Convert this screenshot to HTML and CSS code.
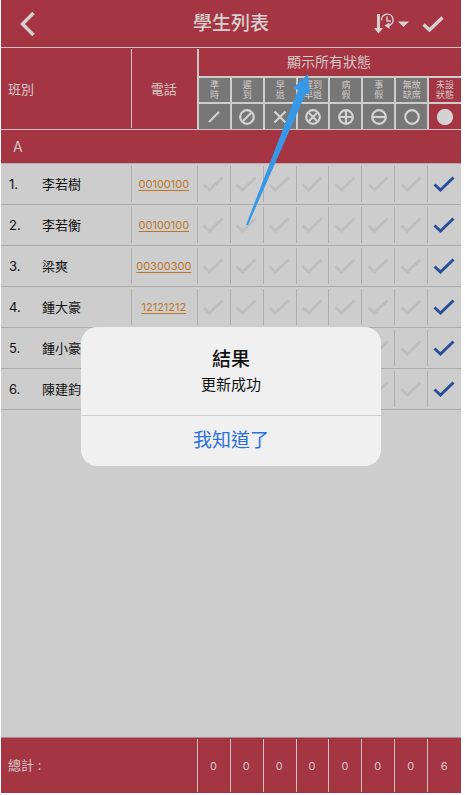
FILE: index.html
```html
<!DOCTYPE html>
<html lang="zh-Hant">
<head>
<meta charset="utf-8">
<meta name="viewport" content="width=device-width, initial-scale=1">
<title>學生列表</title>
<link rel="stylesheet" href="styles.css">
</head>
<body>
<svg class="sprite" aria-hidden="true">
  <symbol id="check" viewBox="0 0 22 16"><path d="M1.5 8.5 7.5 14 20.5 1.5"/></symbol>
  <symbol id="on-time" viewBox="0 0 16 16"><path d="M3 13 13 3"/></symbol>
  <symbol id="late" viewBox="0 0 16 16"><circle cx="8" cy="8" r="6.8"/><path d="M4 12 12 4"/></symbol>
  <symbol id="early" viewBox="0 0 16 16"><path d="M2.5 2.5 13.5 13.5M13.5 2.5 2.5 13.5"/></symbol>
  <symbol id="late-early" viewBox="0 0 16 16"><circle cx="8" cy="8" r="6.8"/><path d="M4 4 12 12M12 4 4 12"/></symbol>
  <symbol id="sick" viewBox="0 0 16 16"><circle cx="8" cy="8" r="6.8"/><path d="M8 1V15M1 8H15"/></symbol>
  <symbol id="leave" viewBox="0 0 16 16"><circle cx="8" cy="8" r="6.8"/><path d="M2 8H14"/></symbol>
  <symbol id="absent" viewBox="0 0 16 16"><circle cx="8" cy="8" r="6.8"/></symbol>
  <symbol id="unset" viewBox="0 0 16 16"><circle cx="8" cy="8" r="7" fill="currentColor"/></symbol>
</svg>
<div class="app">
  <header class="bar">
    <button class="icon-btn back" aria-label="返回"><svg width="20" height="26" viewBox="0 0 20 26"><path d="M15.500 2 4.500 13 15.500 24"/></svg></button>
    <h1>學生列表</h1>
    <div class="actions">
      <button class="icon-btn" aria-label="排序">
        <svg class="sort" width="36" height="22" viewBox="0 0 36 22">
          <path d="M4.500 1V17" stroke-width="3"/><path class="solid" d="M0 15 9 15 4.500 20.500Z"/>
          <path d="M7.500 7.500A5.800 5.800 0 1 1 15 12.500" stroke-width="1.500"/><path d="M13 3.500V8H17" stroke-width="1.500"/><path class="solid" d="M15.500 9.500V16L10.500 12.500Z"/>
          <path class="solid" d="M24 8.500H35L29.500 14Z"/>
        </svg>
      </button>
      <button class="icon-btn" aria-label="確定"><svg class="done" width="22" height="16"><use href="#check"/></svg></button>
    </div>
  </header>
  <main>
    <table class="grid">
      <colgroup><col class="c-name"><col class="c-phone"><col span="7" class="c-state"><col class="c-last"></colgroup>
      <thead>
        <tr class="r-title"><th rowspan="3" class="class-head">班別</th><th rowspan="3" class="phone-head">電話</th><th colspan="8" class="all-head">顯示所有狀態</th></tr>
        <tr class="r-label" id="labels"></tr>
        <tr class="r-icon" id="icons"></tr>
        <tr class="r-section"><th colspan="10">A</th></tr>
      </thead>
      <tbody id="students"></tbody>
    </table>
  </main>
  <footer>
    <table class="grid totals">
      <colgroup><col class="c-name"><col class="c-phone"><col span="7" class="c-state"><col class="c-last"></colgroup>
      <tbody><tr><th colspan="2">總計 :</th><td>0</td><td>0</td><td>0</td><td>0</td><td>0</td><td>0</td><td>0</td><td>6</td></tr></tbody>
    </table>
  </footer>
  <div class="shade">
    <section class="alert" role="alertdialog" aria-labelledby="alert-title" aria-describedby="alert-text">
      <div class="alert-body"><h2 id="alert-title">結果</h2><p id="alert-text">更新成功</p></div>
      <button class="alert-ok">我知道了</button>
    </section>
  </div>
  <svg class="pointer" width="66" height="152" viewBox="0 0 66 152" aria-hidden="true"><path d="M62 0 47 14 52 16 0 151 2 151 60 19 64 21Z"/></svg>
</div>
<script src="app.js"></script>
</body>
</html>
```
FILE: app.js
```js
const states = [
  ['準', '時', 'on-time'], ['遲', '到', 'late'], ['早', '退', 'early'], ['遲到', '早退', 'late-early'],
  ['病', '假', 'sick'], ['事', '假', 'leave'], ['無故', '缺席', 'absent'], ['未設', '狀態', 'unset'],
];
const students = [
  ['李若樹', '00100100'], ['李若衡', '00100100'], ['梁爽', '00300300'],
  ['鍾大豪', '12121212'], ['鍾小豪', '12121212'], ['陳建鈞', '12121212'],
];
const icon = (name, w, h) => `<svg width="${w}" height="${h}"><use href="#${name}"/></svg>`;

document.getElementById('labels').innerHTML =
  states.map(([a, b]) => `<th class="state">${a}<br>${b}</th>`).join('');
document.getElementById('icons').innerHTML =
  states.map(([a, b, id]) => `<th class="state"><button class="icon-btn" aria-label="${a}${b}">${icon(id, 16, 16)}</button></th>`).join('');
document.getElementById('students').innerHTML = students.map(([name, phone], i) =>
  `<tr><td class="name"><span class="num">${i + 1}.</span>${name}</td>` +
  `<td class="phone"><a href="tel:${phone}">${phone}</a></td>` +
  states.map(([a, b, id]) => `<td class="mark"><button class="icon-btn${id === 'unset' ? ' on' : ''}" aria-label="${name} ${a}${b}">${icon('check', 22, 16)}</button></td>`).join('') +
  '</tr>').join('');
```
FILE: styles.css
```css
* { box-sizing: border-box; }
body {
  margin: 0;
  padding: 0 4px 2px 1px;
  background: #fff;
  font-family: Inter, "Noto Sans CJK TC", sans-serif;
}
.sprite { position: absolute; width: 0; height: 0; }
.app {
  position: relative;
  display: flex;
  flex-direction: column;
  min-height: calc(100vh - 2px);
  background: #cdcdcd;
  color: #111;
}
main { flex: 1; }
svg { display: block; fill: none; stroke: currentColor; }
.icon-btn {
  display: grid;
  place-items: center;
  padding: 0;
  border: 0;
  background: none;
  color: inherit;
}
.bar {
  display: grid;
  grid-template-columns: 1fr auto 1fr;
  align-items: center;
  height: 47px;
  padding: 0 17px;
  background: #a63543;
  color: #d6d0cf;
}
.bar h1 { margin: 0; font-size: 19px; font-weight: 500; line-height: 24px; }
.back { justify-self: start; stroke-width: 3.4; }
.actions { display: flex; gap: 12px; justify-content: flex-end; align-items: center; }
.done { stroke-width: 3.4; }
.solid { fill: currentColor; stroke: none; }

.grid {
  width: 100%;
  table-layout: fixed;
  border-collapse: separate;
  border-spacing: 0;
}
.c-name { width: 28.2%; }
.c-phone { width: 14.4%; }
.c-state { width: 7.15%; }
.grid th, .grid td { padding: 0; font-weight: 400; background-repeat: no-repeat; }
thead, .totals { color: #d3c9c9; }
thead th {
  border-top: 1px solid #cdbfbb;
  background-color: #a63543;
}
.grid .class-head { padding-left: 7px; text-align: left; font-size: 13px; }
thead .phone-head { font-size: 13px; }
.phone-head, .all-head {
  background-image: linear-gradient(#cdc5c3, #cdc5c3);
  background-position: left 1px;
  background-size: 1px calc(100% - 2px);
}
.all-head { background-size: 2px calc(100% - 1px); }
.r-title { height: 29px; }
.all-head { font-size: 14px; line-height: 20px; }
.r-label { height: 26px; }
.r-icon { height: 27px; }
.r-label th { font-family: "Noto Sans CJK TC", sans-serif; font-size: 9px; line-height: 10px; }
.state {
  border-top: 2px solid #cdcdcd;
  border-left: 2px solid #cdcdcd;
  background-color: #777;
}
.state:last-child { background-color: #a63543; }
.state .icon-btn { width: 100%; stroke-width: 2.2; color: #d3d3d3; }
.r-section { height: 35px; }
.grid .r-section th { padding-left: 12px; border-bottom: 1px solid #c0a9a9; text-align: left; font-size: 14px; }

#students tr { height: 41px; }
#students td {
  border-bottom: 1px solid #aaa;
  background-image: linear-gradient(#adadad, #adadad);
  background-position: left 2px;
  background-size: 1px calc(100% - 4px);
}
#students .name { padding: 0 0 2px 8px; background-image: none; font-size: 13px; }
.num { display: inline-block; width: 33px; font-size: 13px; }
.phone { text-align: center; font-size: 11px; }
.phone a { color: #bb782c; text-underline-offset: 2px; }
.mark .icon-btn { width: 100%; height: 36px; color: #bebebe; stroke-width: 3; }
.mark .on { color: #294f9b; }

.totals { background: #a63543; border-top: 1px solid #a88a8a; }
.totals tr { height: 55px; }
.grid.totals th { padding: 0 0 2px 7px; text-align: left; font-size: 13px; }
.totals td {
  text-align: center;
  font-size: 11px;
  background-image: linear-gradient(#cdbfbf, #cdbfbf);
  background-position: left 1px;
  background-size: 1px calc(100% - 2px);
}

.shade { position: absolute; inset: 0; display: grid; place-items: center; }
.alert {
  width: 65.2%;
  overflow: hidden;
  border-radius: 16px;
  background: #f0f0f0;
  text-align: center;
}
.alert-body { padding: 20px 16px 18px; }
.alert h2 { margin: 0; font-size: 19px; font-weight: 500; line-height: 26px; }
.alert p { margin: 0; font-size: 15px; line-height: 24px; }
.alert-ok {
  display: block;
  width: 100%;
  height: 51px;
  border: 0;
  border-top: 1px solid #cfcfcf;
  background: none;
  color: #2b70dc;
  font: 400 19px/26px Inter, "Noto Sans CJK TC", sans-serif;
}
.pointer { position: absolute; left: 245px; top: 74px; pointer-events: none; fill: #3898e8; stroke: none; }
```
